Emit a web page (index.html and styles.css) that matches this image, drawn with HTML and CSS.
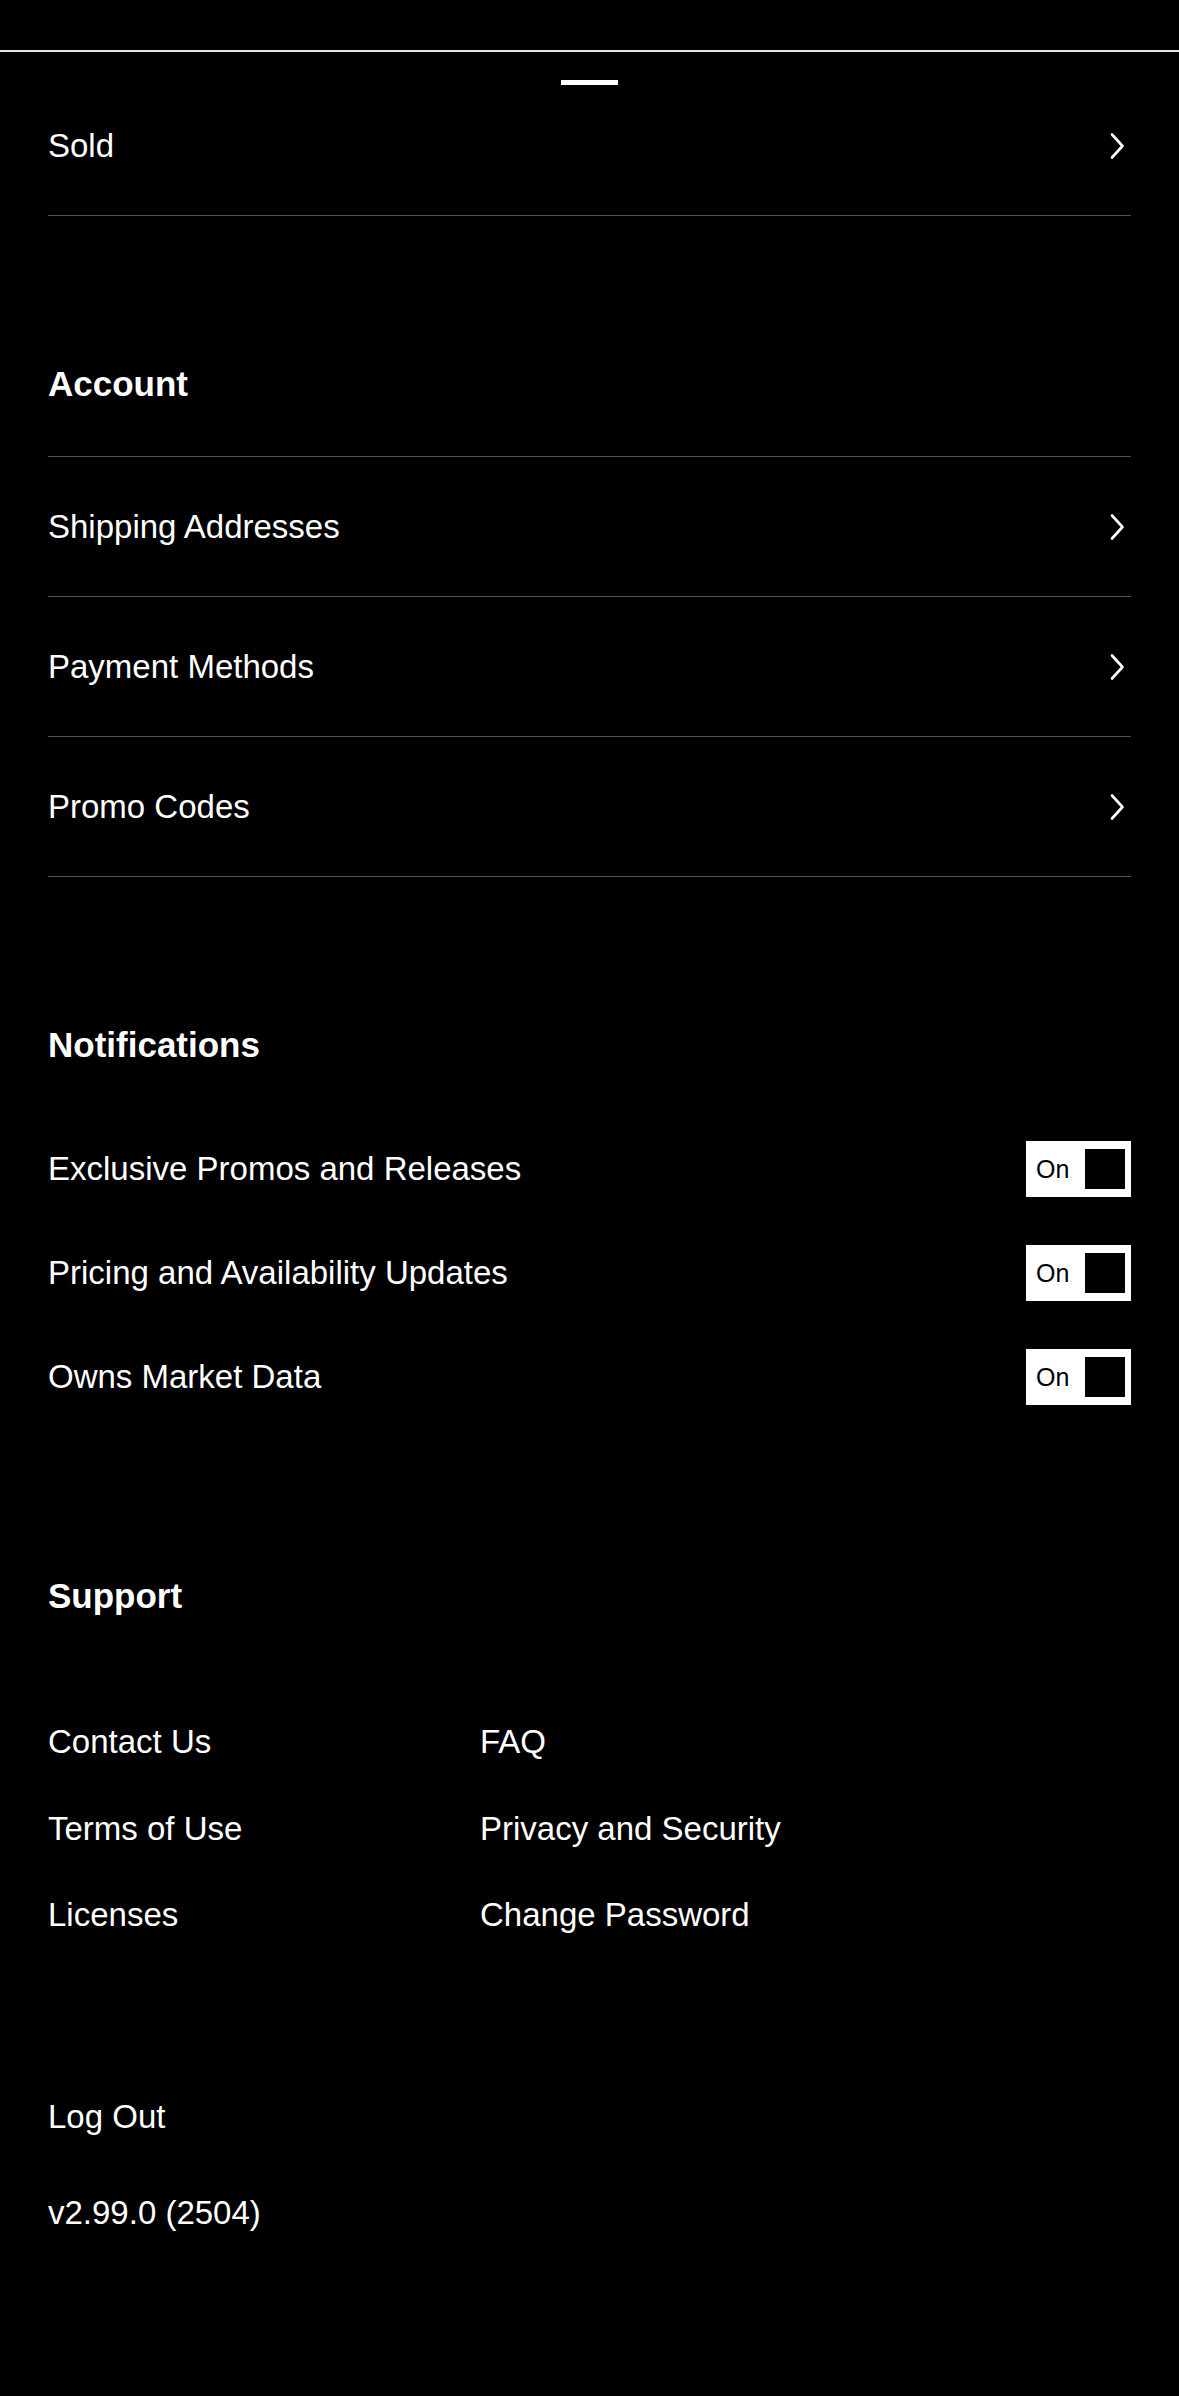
FILE: index.html
```html
<!DOCTYPE html>
<html lang="en">
<head>
<meta charset="utf-8">
<title>Settings</title>
<link rel="stylesheet" href="styles.css">
</head>
<body>
<div class="topbar"></div>
<main class="sheet">
  <div class="handle"></div>

  <ul class="list list-first">
    <li class="row row-first">
      <span class="label">Sold</span>
      <svg class="chev" viewBox="0 0 24 28" width="24" height="28"><path d="M5 2.5 L15.5 14 L5 25.5"/></svg>
    </li>
  </ul>

  <h2 class="section-title">Account</h2>
  <ul class="list">
    <li class="row">
      <span class="label">Shipping Addresses</span>
      <svg class="chev" viewBox="0 0 24 28" width="24" height="28"><path d="M5 2.5 L15.5 14 L5 25.5"/></svg>
    </li>
    <li class="row">
      <span class="label">Payment Methods</span>
      <svg class="chev" viewBox="0 0 24 28" width="24" height="28"><path d="M5 2.5 L15.5 14 L5 25.5"/></svg>
    </li>
    <li class="row">
      <span class="label">Promo Codes</span>
      <svg class="chev" viewBox="0 0 24 28" width="24" height="28"><path d="M5 2.5 L15.5 14 L5 25.5"/></svg>
    </li>
  </ul>

  <h2 class="section-title">Notifications</h2>
  <ul class="toggles">
    <li class="toggle-row">
      <span class="label">Exclusive Promos and Releases</span>
      <span class="toggle"><span class="toggle-text">On</span><span class="toggle-knob"></span></span>
    </li>
    <li class="toggle-row">
      <span class="label">Pricing and Availability Updates</span>
      <span class="toggle"><span class="toggle-text">On</span><span class="toggle-knob"></span></span>
    </li>
    <li class="toggle-row">
      <span class="label">Owns Market Data</span>
      <span class="toggle"><span class="toggle-text">On</span><span class="toggle-knob"></span></span>
    </li>
  </ul>

  <h2 class="section-title section-support">Support</h2>
  <div class="links">
    <span class="label">Contact Us</span>
    <span class="label">FAQ</span>
    <span class="label">Terms of Use</span>
    <span class="label">Privacy and Security</span>
    <span class="label">Licenses</span>
    <span class="label">Change Password</span>
  </div>

  <div class="logout label">Log Out</div>
  <div class="version label">v2.99.0 (2504)</div>
</main>
</body>
</html>
```
FILE: styles.css
```css
html, body {
  margin: 0;
  padding: 0;
  background: #000;
}
body {
  color: #fff;
  font-family: "Liberation Sans", Arial, sans-serif;
  min-height: 2396px;
}
.topbar {
  height: 50px;
  border-bottom: 2px solid #e6e6e6;
}
.sheet {
  padding: 28px 48px 0 48px;
}
.handle {
  width: 57px;
  height: 5px;
  background: #fff;
  margin: 0 auto;
}
ul {
  list-style: none;
  margin: 0;
  padding: 0;
}
.label {
  font-size: 33px;
  line-height: 36px;
}
.list {
  border-top: 1px solid #525252;
}
.list-first {
  border-top: none;
}
.row {
  height: 139px;
  display: flex;
  align-items: center;
  justify-content: space-between;
  border-bottom: 1px solid #525252;
}
.row-first {
  height: 122px;
  padding-bottom: 8px;
}
.chev {
  display: block;
  fill: none;
  stroke: #fff;
  stroke-width: 2.6;
  stroke-linecap: round;
  stroke-linejoin: round;
}
.section-title {
  margin: 150px 0 54px 0;
  font-size: 35px;
  line-height: 36px;
  font-weight: 700;
}
.toggles {
  margin-top: -54px;
  padding-top: 78px;
  display: flex;
  flex-direction: column;
  gap: 48px;
}
.toggle-row {
  height: 56px;
  display: flex;
  align-items: center;
  justify-content: space-between;
}
.toggle {
  width: 105px;
  height: 56px;
  box-sizing: border-box;
  background: #fff;
  display: flex;
  align-items: center;
  justify-content: space-between;
  padding: 0 6px 0 10px;
}
.toggle-text {
  color: #000;
  font-size: 25px;
  line-height: 25px;
}
.toggle-knob {
  width: 40px;
  height: 40px;
  background: #000;
}
.section-support {
  margin-top: 173px;
  margin-bottom: 110px;
}
.links {
  display: grid;
  grid-template-columns: 432px 1fr;
  row-gap: 50.5px;
}
.logout {
  margin-top: 166px;
}
.version {
  margin-top: 60px;
}
```
